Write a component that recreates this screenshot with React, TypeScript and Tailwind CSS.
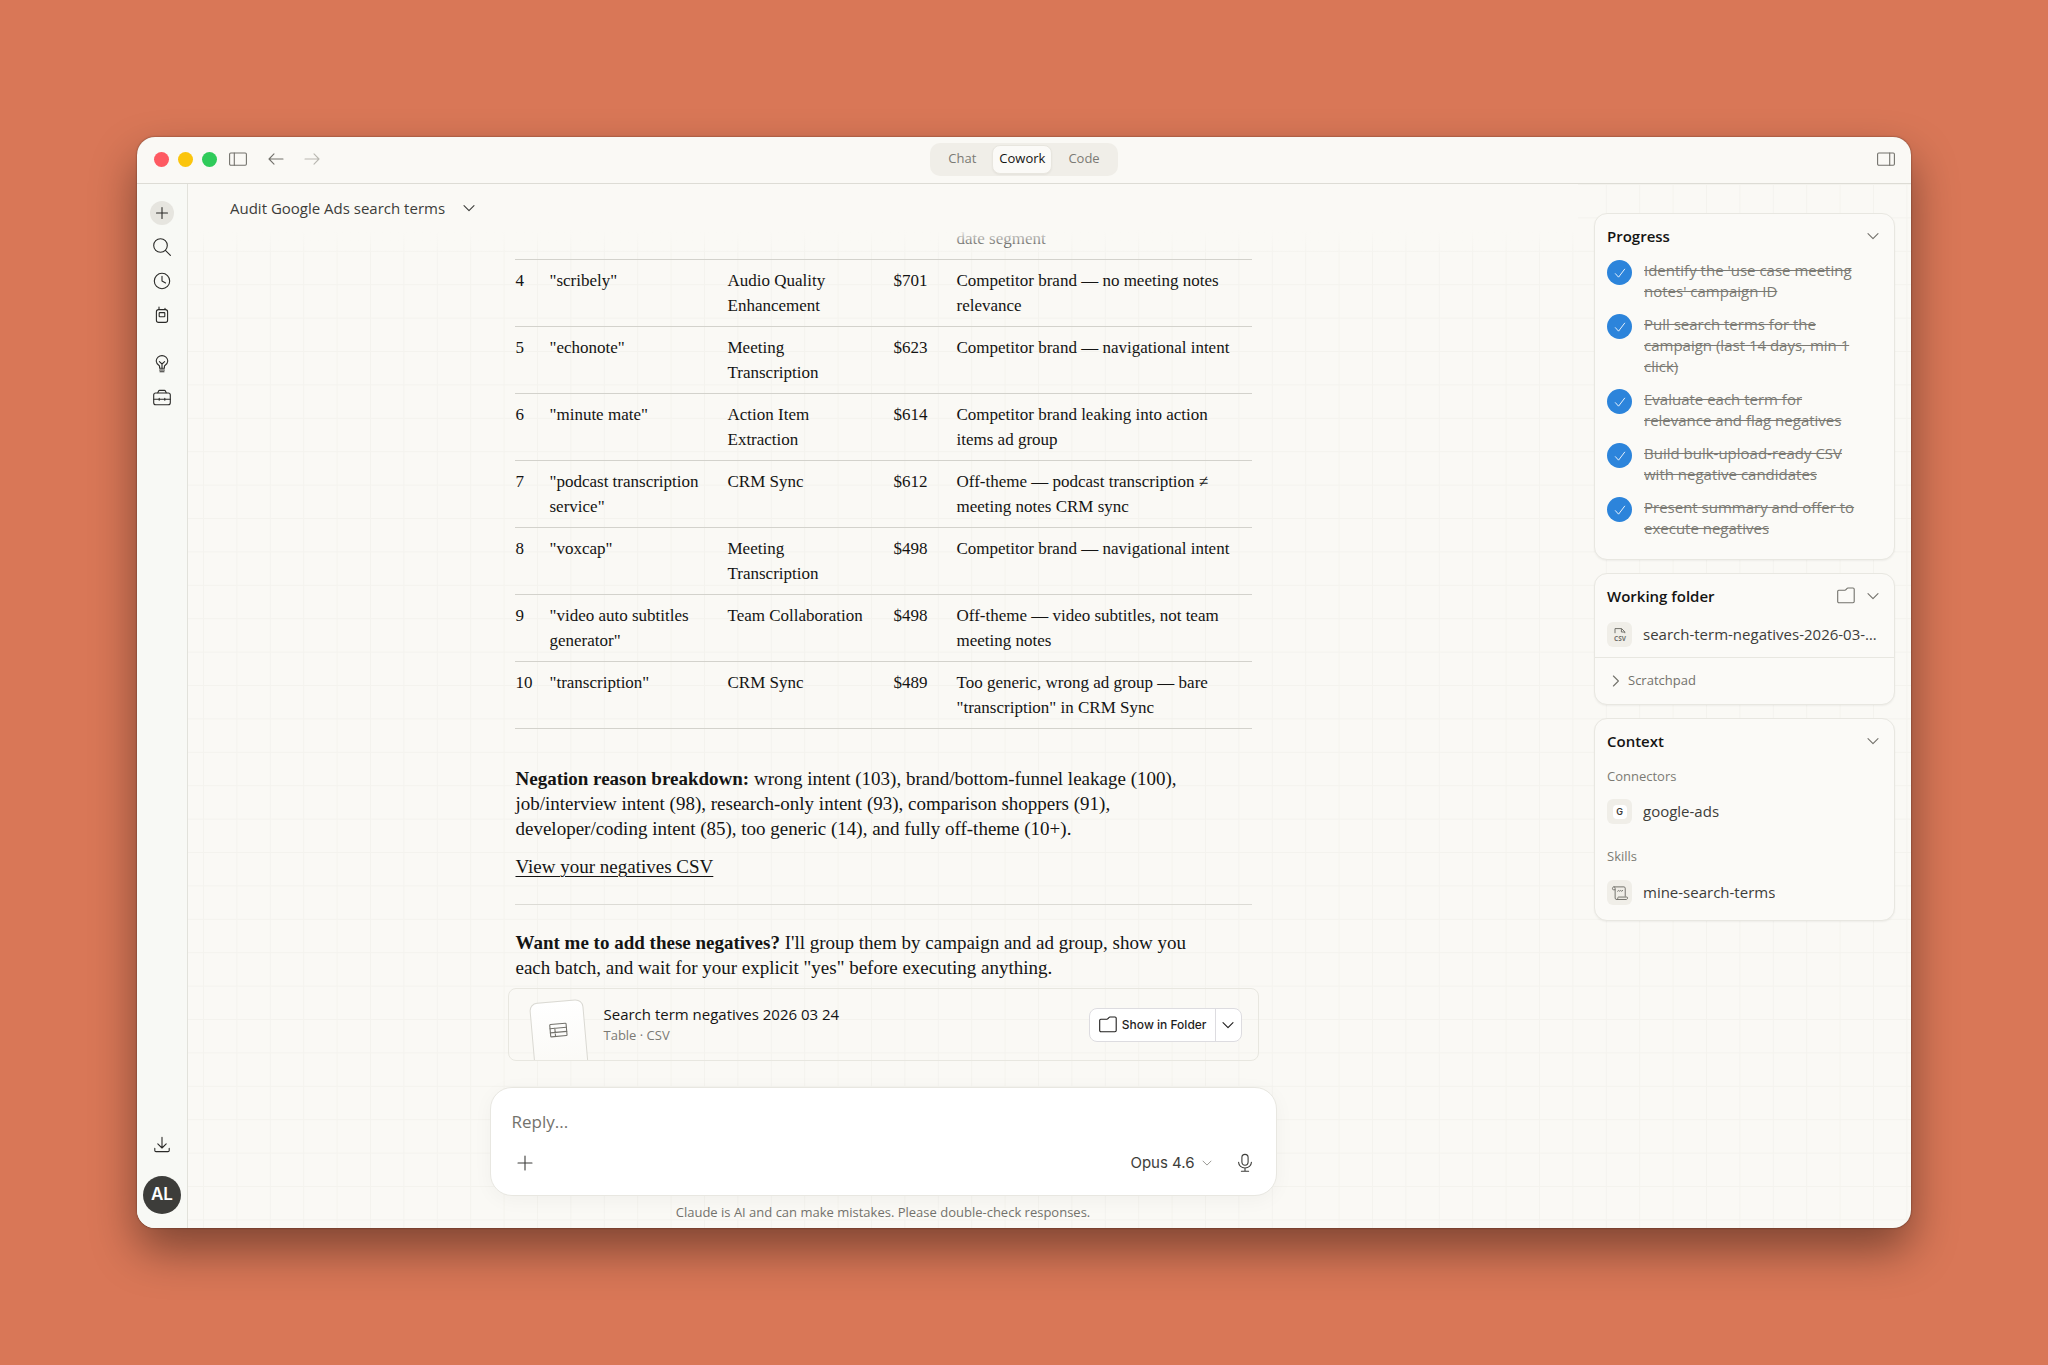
import type { ReactNode } from "react"
import clsx from "clsx"

const rows = [
  { n: 4, term: '"scribely"', group: "Audio Quality Enhancement", cost: "$701", reason: "Competitor brand — no meeting notes relevance" },
  { n: 5, term: '"echonote"', group: "Meeting Transcription", cost: "$623", reason: "Competitor brand — navigational intent" },
  { n: 6, term: '"minute mate"', group: "Action Item Extraction", cost: "$614", reason: "Competitor brand leaking into action items ad group" },
  { n: 7, term: '"podcast transcription service"', group: "CRM Sync", cost: "$612", reason: "Off-theme — podcast transcription ≠ meeting notes CRM sync" },
  { n: 8, term: '"voxcap"', group: "Meeting Transcription", cost: "$498", reason: "Competitor brand — navigational intent" },
  { n: 9, term: '"video auto subtitles generator"', group: "Team Collaboration", cost: "$498", reason: "Off-theme — video subtitles, not team meeting notes" },
  { n: 10, term: '"transcription"', group: "CRM Sync", cost: "$489", reason: 'Too generic, wrong ad group — bare "transcription" in CRM Sync' },
]

const steps = [
  "Identify the 'use case meeting notes' campaign ID",
  "Pull search terms for the campaign (last 14 days, min 1 click)",
  "Evaluate each term for relevance and flag negatives",
  "Build bulk-upload-ready CSV with negative candidates",
  "Present summary and offer to execute negatives",
]

function Icon({ children, className }: { children: ReactNode; className?: string }) {
  return (
    <svg
      viewBox="0 0 20 20"
      fill="none"
      stroke="currentColor"
      strokeWidth={1.1}
      strokeLinecap="round"
      strokeLinejoin="round"
      className={clsx("shrink-0", className ?? "size-5")}
      aria-hidden="true"
    >
      {children}
    </svg>
  )
}

const Chevron = ({ className }: { className?: string }) => (
  <Icon className={className}>
    <path d="M5 7.6l5 5 5-5" />
  </Icon>
)

const Folder = ({ className }: { className?: string }) => (
  <Icon className={className}>
    <path d="M1.7 5.2c0-.6.4-1 1-1h6.1c.5 0 .9-.2 1.2-.6l.8-1c.3-.4.7-.6 1.2-.6h5c.7 0 1.2.5 1.2 1.2v12.400c0 .7-.5 1.200-1.200 1.200H2.900c-.7 0-1.200-.5-1.200-1.200z" />
  </Icon>
)

const navButton = "flex size-6 items-center justify-center rounded-full"

function Sidebar() {
  return (
    <nav aria-label="Main" className="flex w-[51px] shrink-0 flex-col items-center border-r border-[#e2e2db] bg-[#f8f9f5] pt-[17px] pb-[14px] text-[#2b2b28]">
      <button aria-label="New task" className={clsx(navButton, "bg-[#e6e5df]")}>
        <Icon><path d="M10 4.5v11M4.5 10h11" /></Icon>
      </button>
      <button aria-label="Search" className={clsx(navButton, "mt-[10px]")}>
        <Icon><circle cx="8.5" cy="8.5" r="6.8" /><path d="M13.4 13.4l5 5" /></Icon>
      </button>
      <button aria-label="Scheduled" className={clsx(navButton, "mt-[10px]")}>
        <Icon><circle cx="10" cy="10" r="7.7" /><path d="M10 5.2V10l3.6 1.9" /></Icon>
      </button>
      <button aria-label="Dispatch" className={clsx(navButton, "mt-[10px]")}>
        <Icon>
          <rect x="4.4" y="4.6" width="11.2" height="12.8" rx="2.2" />
          <rect x="7.2" y="7.6" width="5.6" height="4.2" rx=".6" />
          <path d="M7 4.4V2M13 4.4V3.2" />
        </Icon>
      </button>
      <button aria-label="Ideas" className={clsx(navButton, "mt-[25px]")}>
        <Icon>
          <path d="M7.6 14.2v-1.6c0-.6-.3-1-.8-1.4A5.6 5.6 0 014.2 7 5.8 5.8 0 0110 1.6 5.8 5.8 0 0115.8 7a5.6 5.6 0 01-2.6 4.2c-.5.4-.8.8-.8 1.4v1.6z" />
          <path d="M7.4 7.6L10 10l2.6-2.4M10 10v4M7.6 16h4.8M8 17.8h4" />
        </Icon>
      </button>
      <button aria-label="Customize" className={clsx(navButton, "mt-[10px]")}>
        <Icon>
          <rect x="1.7" y="5" width="16.6" height="11.8" rx="2" />
          <path d="M5.8 4.8l.8-1.8c.2-.4.5-.6.9-.6h5c.4 0 .7.2.9.6l.8 1.8M1.8 11.2h16.4M7.2 10.2v2M12.8 10.2v2" />
        </Icon>
      </button>
      <div className="mt-auto flex flex-col items-center gap-[19px]">
        <button aria-label="Downloads" className={navButton}>
          <Icon><path d="M10 2.4v10.400M5.800 8.900L10 13l4.200-4.100M2.800 13.400v2c0 .7.500 1.200 1.200 1.200h12c.7 0 1.200-.5 1.200-1.200v-2" /></Icon>
        </button>
        <button className="flex size-[38px] items-center justify-center rounded-full bg-[#3d3d3a] font-['Inter',sans-serif] text-[17px] font-semibold text-white">
          AL
        </button>
      </div>
    </nav>
  )
}

function TitleBar() {
  return (
    <header className="grid h-[47px] shrink-0 grid-cols-[1fr_auto_1fr] items-center border-b border-[#dddcd5] px-[17px] pb-[2px]">
      <div className="flex items-center text-[#73726c]">
        <div className="flex gap-[9px]">
          <span className="size-[15px] rounded-full bg-[#fe5a62]" />
          <span className="size-[15px] rounded-full bg-[#fbc50c]" />
          <span className="size-[15px] rounded-full bg-[#2fcb5a]" />
        </div>
        <button aria-label="Toggle sidebar" className="ml-[11px]">
          <Icon><rect x="1.6" y="4" width="16.8" height="12.2" rx="1.2" /><path d="M6.3 4v12.2" /></Icon>
        </button>
        <button aria-label="Back" className="ml-[18px]">
          <Icon><path d="M17 10H3M8 4.8L3 10l5 5.2" /></Icon>
        </button>
        <button aria-label="Forward" className="ml-4 text-[#b9b8b1]">
          <Icon><path d="M3 10h14M12 4.8l5 5.2-5 5.2" /></Icon>
        </button>
      </div>
      <div className="flex h-[33px] items-center rounded-[10px] bg-[#f0eee8] p-[2px] text-[13px] font-medium text-[#7b7a74]">
        <button className="px-4">Chat</button>
        <button className="h-full rounded-lg border border-[#e8e6df] bg-[#fbfaf7] px-[6px] text-[#141413] shadow-xs">Cowork</button>
        <button className="px-4">Code</button>
      </div>
      <button aria-label="Toggle details" className="-mr-[2px] justify-self-end text-[#73726c]">
        <Icon><rect x="1.6" y="4" width="16.8" height="12.2" rx="1.2" /><path d="M13.7 4v12.2" /></Icon>
      </button>
    </header>
  )
}

function Conversation() {
  return (
    <div className="flex min-h-0 flex-1 flex-col items-center justify-end overflow-hidden font-['Liberation_Serif',serif] text-[#141413]">
      <div className="w-full max-w-[751px] shrink-0 px-[7px]">
        <table className="w-full table-fixed border-collapse text-left text-[17px] leading-[25px]">
          <colgroup>
            <col className="w-[34px]" />
            <col className="w-[178px]" />
            <col className="w-[166px]" />
            <col className="w-[64px]" />
            <col />
          </colgroup>
          <tbody>
            <tr className="border-b border-[#d3d2cc]">
              <td colSpan={4} />
              <td className="pb-2">date segment</td>
            </tr>
            {rows.map((row) => (
              <tr key={row.n} className="border-b border-[#d3d2cc] align-top">
                <td className="py-2 pl-[1px]">{row.n}</td>
                <td className="py-2 pr-4 pl-[1px]">{row.term}</td>
                <td className="py-2 pr-7 pl-[1px]">{row.group}</td>
                <td className="py-2 pl-[1px]">{row.cost}</td>
                <td className="py-2 pr-4">{row.reason}</td>
              </tr>
            ))}
          </tbody>
        </table>
        <div className="pr-11 pl-[1px] text-[19px] leading-[25px]">
          <p className="mt-[37px]">
            <strong>Negation reason breakdown:</strong> wrong intent (103), brand/bottom-funnel leakage (100), job/interview
            intent (98), research-only intent (93), comparison shoppers (91), developer/coding intent (85), too generic
            (14), and fully off-theme (10+).
          </p>
          <p className="mt-[13px]">
            <a href="#csv" className="underline decoration-1 underline-offset-3">View your negatives CSV</a>
          </p>
        </div>
        <hr className="mt-[25px] border-[#dcdbd5]" />
        <p className="mt-[25px] pr-11 pl-[1px] text-[19px] leading-[25px]">
          <strong>Want me to add these negatives?</strong> I'll group them by campaign and ad group, show you each batch,
          and wait for your explicit "yes" before executing anything.
        </p>
      </div>
      <FileCard />
    </div>
  )
}

function FileCard() {
  return (
    <div className="mt-2 flex h-[73px] w-full max-w-[751px] shrink-0 items-center overflow-hidden rounded-lg border border-[#e8e7e0] pr-4 pl-[23px] font-['Open_Sans',sans-serif]">
      <div className="mt-6 flex h-[72px] w-[54px] -rotate-5 items-start justify-center rounded-lg border border-[#dad9d3] bg-linear-to-b from-white to-[#faf9f5] pt-[18px] text-[#73726c]">
        <Icon>
          <rect x="1.8" y="3.8" width="16.4" height="12.4" rx=".8" />
          <path d="M1.8 8h16.4M1.8 12.1h16.4M6.6 8v8.2" />
        </Icon>
      </div>
      <div className="ml-[18px] flex-1">
        <div className="text-[15px] leading-[21px] text-[#141413]">Search term negatives 2026 03 24</div>
        <div className="text-[13px] leading-[21px] text-[#7b7a74]">Table · CSV</div>
      </div>
      <div className="flex h-[34px] overflow-hidden rounded-lg border border-[#dddce0] bg-white text-[#1f1e1d]">
        <button className="flex items-center gap-1 px-2 font-['Inter',sans-serif] text-[12px] font-medium">
          <Folder className="size-5" />
          Show in Folder
        </button>
        <button aria-label="More options" className="flex w-[26px] items-center justify-center border-l border-[#dddce0]">
          <Chevron />
        </button>
      </div>
    </div>
  )
}

function Composer() {
  return (
    <div className="mx-auto mt-[26px] w-full max-w-[787px] shrink-0">
      <form className="flex h-[109px] flex-col justify-between rounded-[22px] border border-[#e8e7e1] bg-white px-[21px] pt-[21px] pb-[22px] shadow-[0_4px_20px_rgba(0,0,0,0.04)]">
        <input
          aria-label="Reply"
          placeholder="Reply..."
          className="w-full bg-transparent text-[17px] leading-[26px] outline-none placeholder:text-[#73726c]"
        />
        <div className="flex items-center text-[#3d3d3a]">
          <button type="button" aria-label="Add" className="ml-[3px]">
            <Icon><path d="M10 3v14M3 10h14" /></Icon>
          </button>
          <button type="button" className="ml-auto flex items-center gap-1 font-['Inter',sans-serif] text-[15px] leading-5">
            Opus 4.6
            <Chevron className="size-4 text-[#8c8b85]" />
          </button>
          <button type="button" aria-label="Dictate" className="ml-5">
            <Icon>
              <rect x="6.9" y="1.4" width="6.2" height="10.8" rx="3.1" />
              <path d="M3.6 9.4c.2 3.2 2.9 5.6 6.4 5.6s6.2-2.4 6.4-5.6M10 15v3.2M6.4 18.3h7.2" />
            </Icon>
          </button>
        </div>
      </form>
      <p className="pt-[6px] pb-[6px] text-center text-[13px] leading-[20px] text-[#73726c]">
        Claude is AI and can make mistakes. Please double-check responses.
      </p>
    </div>
  )
}

function Panel({ title, action, children }: { title: string; action?: ReactNode; children: ReactNode }) {
  return (
    <section className="rounded-[13px] border border-[#e8e7e1] bg-[#fbfaf7] shadow-xs">
      <div className="flex h-[46px] items-center pr-[11px] pb-[2px] pl-3">
        <h2 className="flex-1 text-[15px] font-semibold text-[#141413]">{title}</h2>
        {action}
        <button aria-label={`Collapse ${title}`} className="text-[#73726c]">
          <Chevron />
        </button>
      </div>
      {children}
    </section>
  )
}

function PanelItem({ icon, label }: { icon: ReactNode; label: string }) {
  return (
    <div className="flex items-center gap-[11px] px-3">
      <span className="flex size-[25px] shrink-0 items-center justify-center rounded-md bg-[#f0eee8] text-[#73726c]">{icon}</span>
      <span className="truncate text-[15px] leading-[25px] text-[#3d3d3a]">{label}</span>
    </div>
  )
}

function Details() {
  return (
    <aside className="flex w-[333px] shrink-0 flex-col gap-[13px] px-4 pt-[29px]">
      <Panel title="Progress">
        <ul className="flex flex-col gap-3 pr-9 pb-5 pl-3">
          {steps.map((step) => (
            <li key={step} className="flex gap-3">
              <span className="flex size-[25px] shrink-0 items-center justify-center rounded-full bg-[#2c84db] text-white">
                <Icon className="size-4"><path d="M4.2 10.8l4 4.4 7.6-10" /></Icon>
              </span>
              <span className="text-[15px] leading-[21px] text-[#7b7a74] line-through">{step}</span>
            </li>
          ))}
        </ul>
      </Panel>
      <Panel
        title="Working folder"
        action={<button aria-label="Open folder" className="mr-[7px] text-[#73726c]"><Folder className="size-5" /></button>}
      >
        <div className="pt-[2px] pb-[10px]">
          <PanelItem
            label="search-term-negatives-2026-03-24.csv"
            icon={
              <svg viewBox="0 0 18 18" className="size-[18px]" fill="none" stroke="currentColor" strokeWidth={1} aria-hidden="true">
                <path d="M4 7.2V2.6h6.6l3.2 3.2v1.4M10.4 2.6v3.4h3.4" />
                <text x="9" y="15" textAnchor="middle" fontSize="6.5" fontWeight="700" fill="currentColor" stroke="none">CSV</text>
              </svg>
            }
          />
        </div>
        <button className="flex h-[47px] w-full items-center gap-[2px] border-t border-[#e8e7e1] pl-[11px] text-[13px] text-[#73726c]">
          <Icon className="size-5"><path d="M7.4 5l5 5-5 5" /></Icon>
          Scratchpad
        </button>
      </Panel>
      <Panel title="Context">
        <h3 className="px-3 pt-[1px] text-[13px] leading-[20px] text-[#7b7a74]">Connectors</h3>
        <div className="mt-[13px]">
          <PanelItem
            label="google-ads"
            icon={<span className="flex size-[14px] items-center justify-center rounded-sm bg-white font-['Inter',sans-serif] text-[9px] font-semibold text-[#3d3d3a]">G</span>}
          />
        </div>
        <h3 className="mt-[22px] px-3 text-[13px] leading-[20px] text-[#7b7a74]">Skills</h3>
        <div className="mt-[14px] pb-[15px]">
          <PanelItem
            label="mine-search-terms"
            icon={
              <Icon className="size-[18px]">
                <path d="M4.4 6.4H2.6c-.6 0-1-.5-1-1.2 0-1.3.7-2 1.6-2h11.2c.8 0 1.4.6 1.4 1.4v9M3.4 3.2c.8.2 1.2.8 1.2 1.6v10.8c0 1 .6 1.6 1.5 1.6h10.8c.9 0 1.5-.7 1.5-1.8 0-.6-.3-.9-.8-.9H8.4c-.5 0-.8.3-.8.8 0 1.2-.5 1.9-1.4 1.9M7.4 8l1.2-.8 1 .8 1.2-.8 1 .8 1.2-.8" />
              </Icon>
            }
          />
        </div>
      </Panel>
    </aside>
  )
}

function GridBackdrop() {
  return (
    <svg className="absolute inset-0 size-full" aria-hidden="true">
      <defs>
        <pattern id="grid" x="15" y="0" width="33.4" height="33.4" patternUnits="userSpaceOnUse">
          <path d="M.5 0v33.4M0 .5h33.4" stroke="#f4f3ee" fill="none" />
        </pattern>
      </defs>
      <rect width="100%" height="100%" fill="url(#grid)" />
    </svg>
  )
}

export default function App() {
  return (
    <div className="h-screen bg-[#d97757] p-[137px] font-['Open_Sans',sans-serif]">
      <div className="flex h-full flex-col overflow-hidden rounded-[18px] bg-[#faf9f5] shadow-[0_0_2px_rgba(0,0,0,0.5),0_22px_46px_rgba(0,0,0,0.42)]">
        <TitleBar />
        <div className="flex min-h-0 flex-1">
          <Sidebar />
          <div className="relative flex min-w-0 flex-1">
            <GridBackdrop />
            <div className="relative flex min-w-0 flex-1">
              <main className="flex min-w-0 flex-1 flex-col">
                <div className="relative z-10 flex h-[46px] shrink-0 items-center bg-[#faf9f5] pt-[2px] pl-[42px]">
                  <button className="flex items-center gap-[14px] text-[15px] font-medium text-[#3d3d3a]">
                    Audit Google Ads search terms
                    <Chevron />
                  </button>
                  <div className="pointer-events-none absolute inset-x-0 top-full h-6 bg-linear-to-b from-[#faf9f5] to-transparent" />
                </div>
                <Conversation />
                <Composer />
              </main>
              <Details />
            </div>
          </div>
        </div>
      </div>
    </div>
  )
}
